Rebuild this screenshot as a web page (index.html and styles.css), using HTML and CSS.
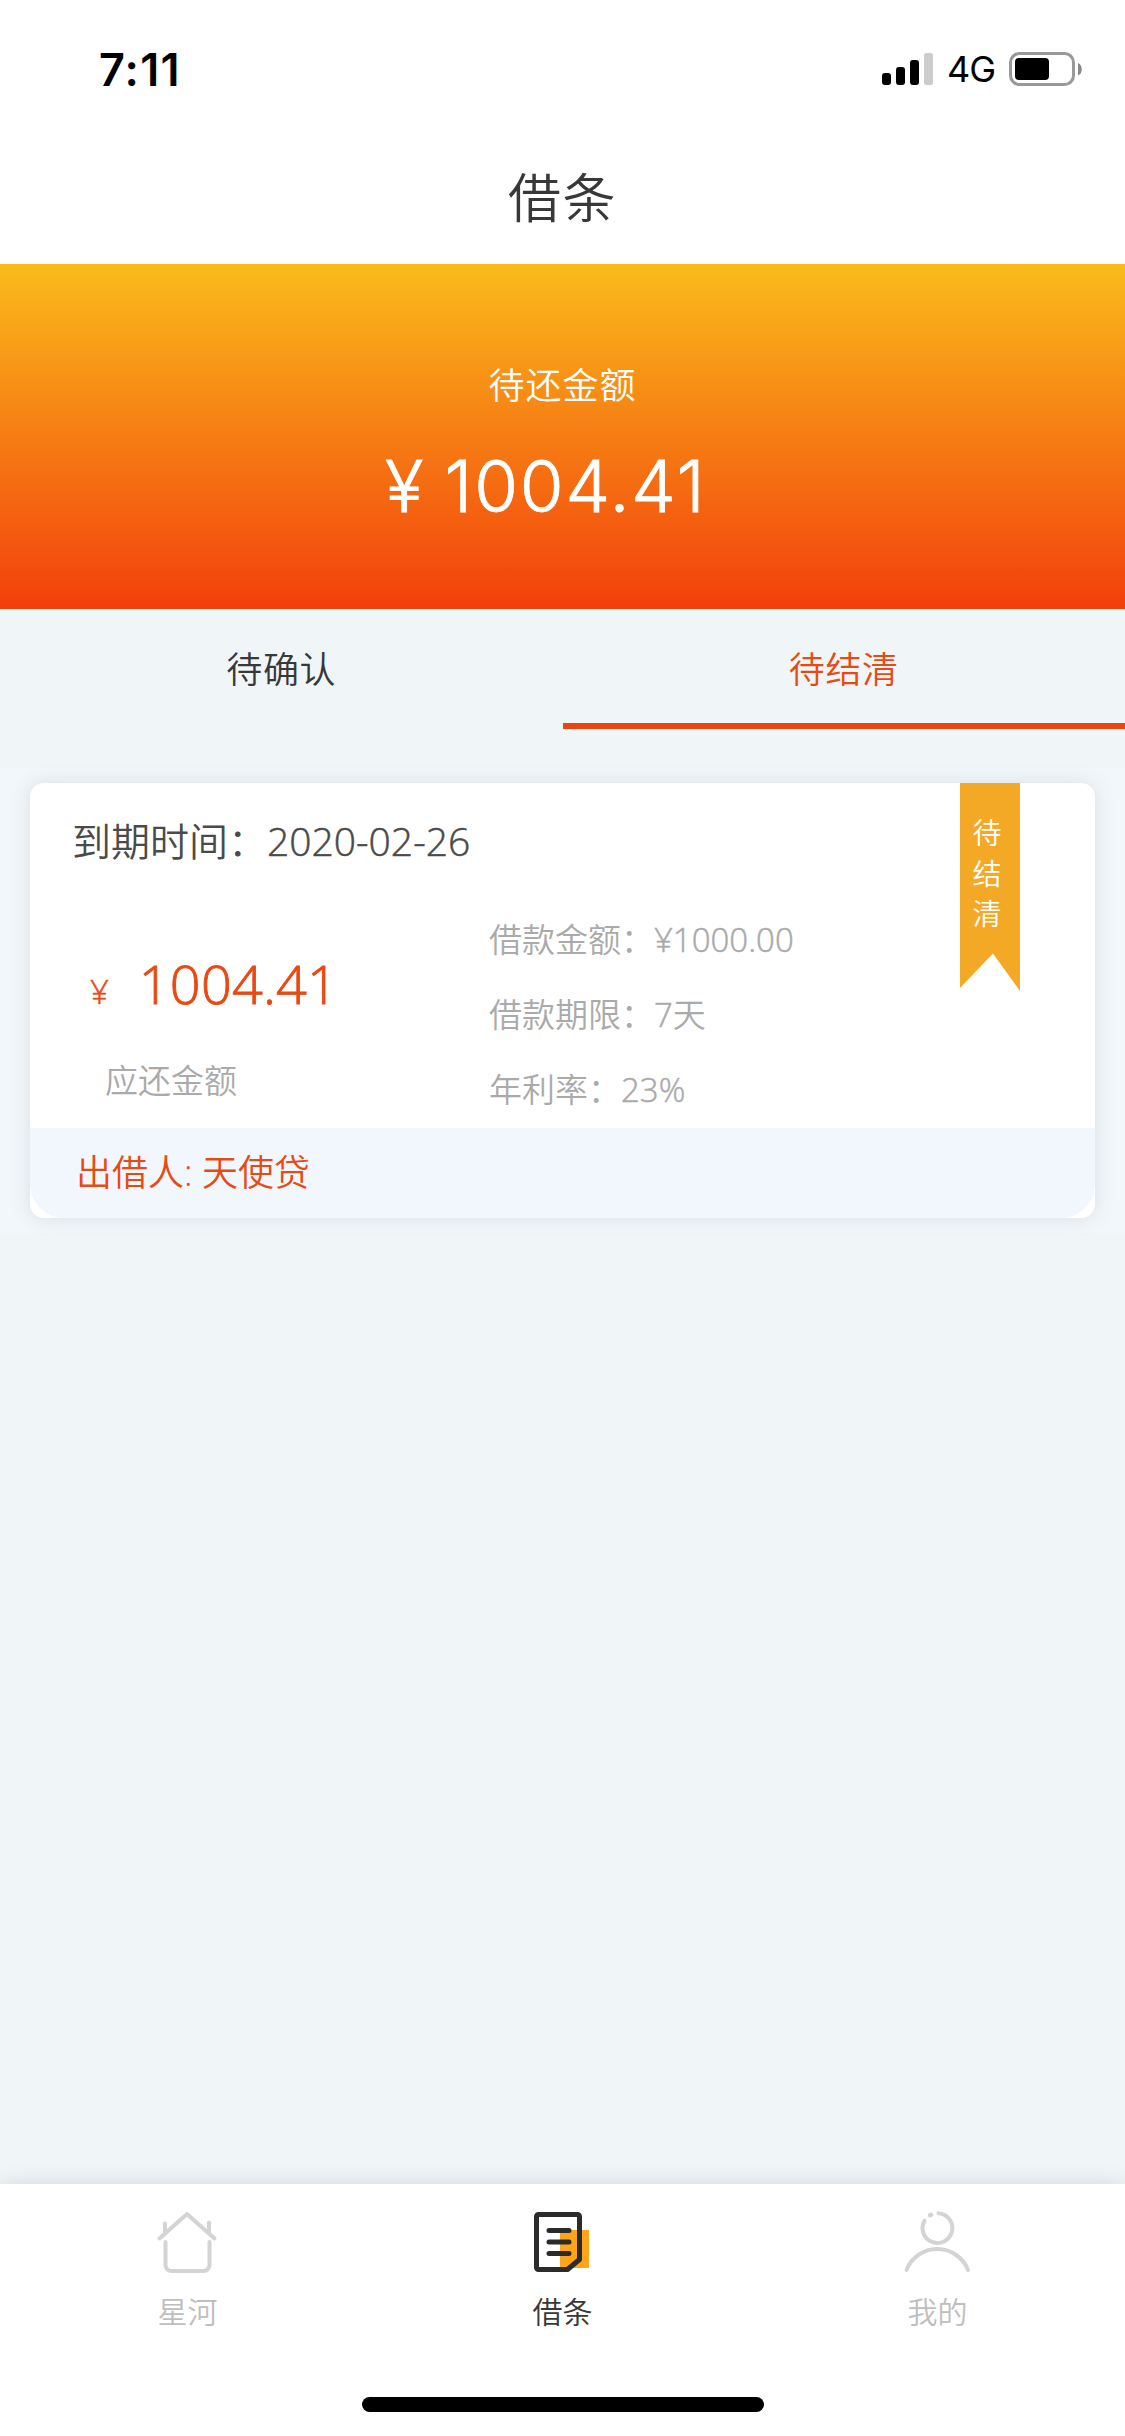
FILE: index.html
```html
<!DOCTYPE html>
<html lang="zh-CN">
<head>
<meta charset="utf-8">
<title>借条</title>
<link rel="stylesheet" href="styles.css">
</head>
<body>
<div class="app">
  <header class="status">
    <span class="clock">7:11</span>
    <div class="indicators">
      <svg class="signal" width="51" height="32" viewBox="0 0 51 32">
        <rect x="0" y="20" width="9" height="12" rx="3"/>
        <rect x="14" y="14" width="9" height="18" rx="3"/>
        <rect x="28" y="7" width="9" height="25" rx="3"/>
        <rect x="42" y="0" width="9" height="32" rx="2.5" fill="#ccc"/>
      </svg>
      <span class="network">4G</span>
      <svg class="battery" width="73" height="34" viewBox="0 0 73 34">
        <rect x="1.5" y="1.5" width="63" height="31" rx="9" fill="none" stroke="#999" stroke-width="3"/>
        <rect x="6" y="6" width="34" height="22" rx="4"/>
        <path d="M69 11c5 1.500 5 11 0 12.500z" fill="#888"/>
      </svg>
    </div>
  </header>
  <h1 class="title">借条</h1>

  <section class="hero">
    <div class="hero-label">待还金额</div>
    <div class="hero-amount"><span class="hero-yen">¥</span><span class="hero-number">1004.41</span></div>
  </section>

  <nav class="tabs">
    <div class="tab">待确认</div>
    <div class="tab tab-active">待结清</div>
  </nav>

  <main class="list">
    <article class="card">
      <div class="due"><span>到期时间：</span><span class="value">2020-02-26</span></div>
      <div class="details">
        <div class="owed">
          <div class="owed-amount"><span class="yen value">¥</span><span class="number">1004.41</span></div>
          <div class="owed-label">应还金额</div>
        </div>
        <div class="terms">
          <div class="term">借款金额：<span class="value">¥1000.00</span></div>
          <div class="term">借款期限：<span class="value">7</span>天</div>
          <div class="term">年利率：<span class="value">23%</span></div>
        </div>
      </div>
      <footer class="lender">出借人: 天使贷</footer>
      <div class="ribbon">待<br>结<br>清</div>
    </article>
  </main>

  <nav class="tabbar">
    <div class="item">
      <svg width="66" height="66" viewBox="0 0 66 66" fill="none" stroke="#d4d4d4" stroke-width="4" stroke-linecap="round" stroke-linejoin="round">
        <path d="M4.500 30.500L32 6l27.500 24.500M10 24.500v-9M54 24v-9.500M10.500 34v23a6 6 0 0 0 6 6h32a6 6 0 0 0 6-6V34"/>
      </svg>
      <span>星河</span>
    </div>
    <div class="item item-active">
      <svg width="66" height="66" viewBox="0 0 66 66" fill="none" stroke="#2b2b2b" stroke-width="5" stroke-linecap="round" stroke-linejoin="round">
        <rect x="30" y="22" width="29" height="38" fill="#ffa41b" stroke="none"/>
        <path d="M8.500 6.500h39a2 2 0 0 1 2 2v43L37.500 61.500H8.500a2 2 0 0 1-2-2v-51a2 2 0 0 1 2-2zM19 22.500h20M19 34h20M19 45.500h20"/>
      </svg>
      <span>借条</span>
    </div>
    <div class="item">
      <svg width="70" height="66" viewBox="0 0 70 66" fill="none" stroke="#d4d4d4" stroke-width="4" stroke-linecap="round">
        <path d="M35.500 5.200a14.900 14.900 0 1 1-14 7.500M3.500 62a33 33 0 0 1 61.500 0"/>
        <path d="M27.200 7.200l.8-.3" stroke-width="4.500"/>
      </svg>
      <span>我的</span>
    </div>
  </nav>
  <div class="home-area"><div class="home-bar"></div></div>
</div>
</body>
</html>
```
FILE: styles.css
```css
* { box-sizing: border-box; }

body {
  margin: 0;
  font-family: "Open Sans", "Noto Sans CJK SC", sans-serif;
  font-weight: 350;
  color: #383838;
}

.app {
  display: flex;
  flex-direction: column;
  width: 1125px;
  height: 2436px;
  background: #f0f5f8;
  overflow: hidden;
}

.status {
  display: flex;
  justify-content: space-between;
  align-items: center;
  height: 138px;
  padding: 0 43px 0 99px;
  background: #fff;
  font-family: Inter, sans-serif;
  color: #000;
}

.clock { font-size: 45px; font-weight: 600; letter-spacing: 1.200px; }

.indicators { display: flex; align-items: center; }

.network {
  width: 62px;
  margin-left: 14px;
  font-size: 36px;
  font-weight: 400;
  letter-spacing: -1px;
}

.title {
  height: 126px;
  margin: 0;
  background: #fff;
  font-size: 53px;
  font-weight: 350;
  letter-spacing: 1.500px;
  line-height: 119px;
  text-align: center;
}

.hero {
  height: 345px;
  padding-top: 96px;
  background: linear-gradient(#fabb1b, #f23f0c);
  color: #fff;
  text-align: center;
}

.hero-label {
  font-size: 36px;
  letter-spacing: 1px;
  line-height: 52px;
}

.hero-amount {
  display: flex;
  padding-left: 385px;
  font-family: Inter, sans-serif;
  font-size: 71px;
  font-weight: 300;
  line-height: 80px;
  margin-top: 34px;
  -webkit-text-stroke: .8px currentColor;
}

.hero-number { margin-left: 21px; letter-spacing: 1.800px; }

.tabs { display: flex; height: 120px; }

.tab {
  flex: 1;
  font-size: 36px;
  letter-spacing: .6px;
  line-height: 122px;
  text-align: center;
}

.tab-active { color: #e84a14; border-bottom: 6px solid #ee4310; }

.list {
  height: 465px;
  margin-top: 39px;
  padding: 15px 30px;
  background: #f2f7fb;
}

.card {
  position: relative;
  height: 435px;
  border-radius: 14px;
  background: #fff;
  box-shadow: 0 0 22px rgba(0, 20, 30, .1);
}

.due {
  display: flex;
  height: 117px;
  padding-left: 42px;
  color: #4a4a4a;
  font-size: 39px;
  line-height: 115px;
}

.value { -webkit-text-stroke: .5px currentColor; }

.details { display: flex; height: 228px; }

.owed { width: 459px; color: #e84a14; }

.owed-amount {
  display: flex;
  align-items: baseline;
  height: 134px;
  padding: 45px 0 0 60px;
  font-size: 33px;
  line-height: 76px;
}

.number {
  margin-left: 30px;
  font-size: 54px;
  letter-spacing: .2px;
  -webkit-text-stroke: .9px currentColor;
}

.owed-label {
  padding-left: 75px;
  color: #aaa;
  font-size: 33px;
  line-height: 94px;
}

.terms {
  padding-top: 2px;
  color: #aaa;
  font-size: 33px;
  line-height: 75px;
}

.lender {
  height: 90px;
  padding-left: 46px;
  border-radius: 0 0 34px 34px;
  background: #f2f6fd;
  color: #e84a14;
  font-size: 36px;
  line-height: 89px;
}

.ribbon {
  position: absolute;
  top: 0;
  right: 75px;
  width: 60px;
  height: 208px;
  padding: 30px 6px 0 0;
  background: #f3a925;
  clip-path: polygon(0 0, 100% 0, 100% 100%, 55% 82%, 0 98.500%);
  color: #fff;
  font-size: 29px;
  line-height: 40.500px;
  text-align: center;
}

.tabbar {
  display: flex;
  height: 162px;
  margin-top: auto;
  background: #fff;
  box-shadow: 0 0 20px rgba(0, 20, 30, .12);
}

.item {
  display: flex;
  flex: 1;
  flex-direction: column;
  align-items: center;
  padding-top: 24px;
  color: #bebebe;
  font-size: 30px;
}

.item svg { flex-shrink: 0; }

.item span { line-height: 72px; padding-top: 2px; }

.item-active { color: #383838; }

.home-area {
  position: relative;
  display: flex;
  justify-content: center;
  height: 90px;
  padding-top: 51px;
  background: #fff;
}

.home-bar {
  width: 402px;
  height: 15px;
  border-radius: 8px;
  background: #000;
}
```
